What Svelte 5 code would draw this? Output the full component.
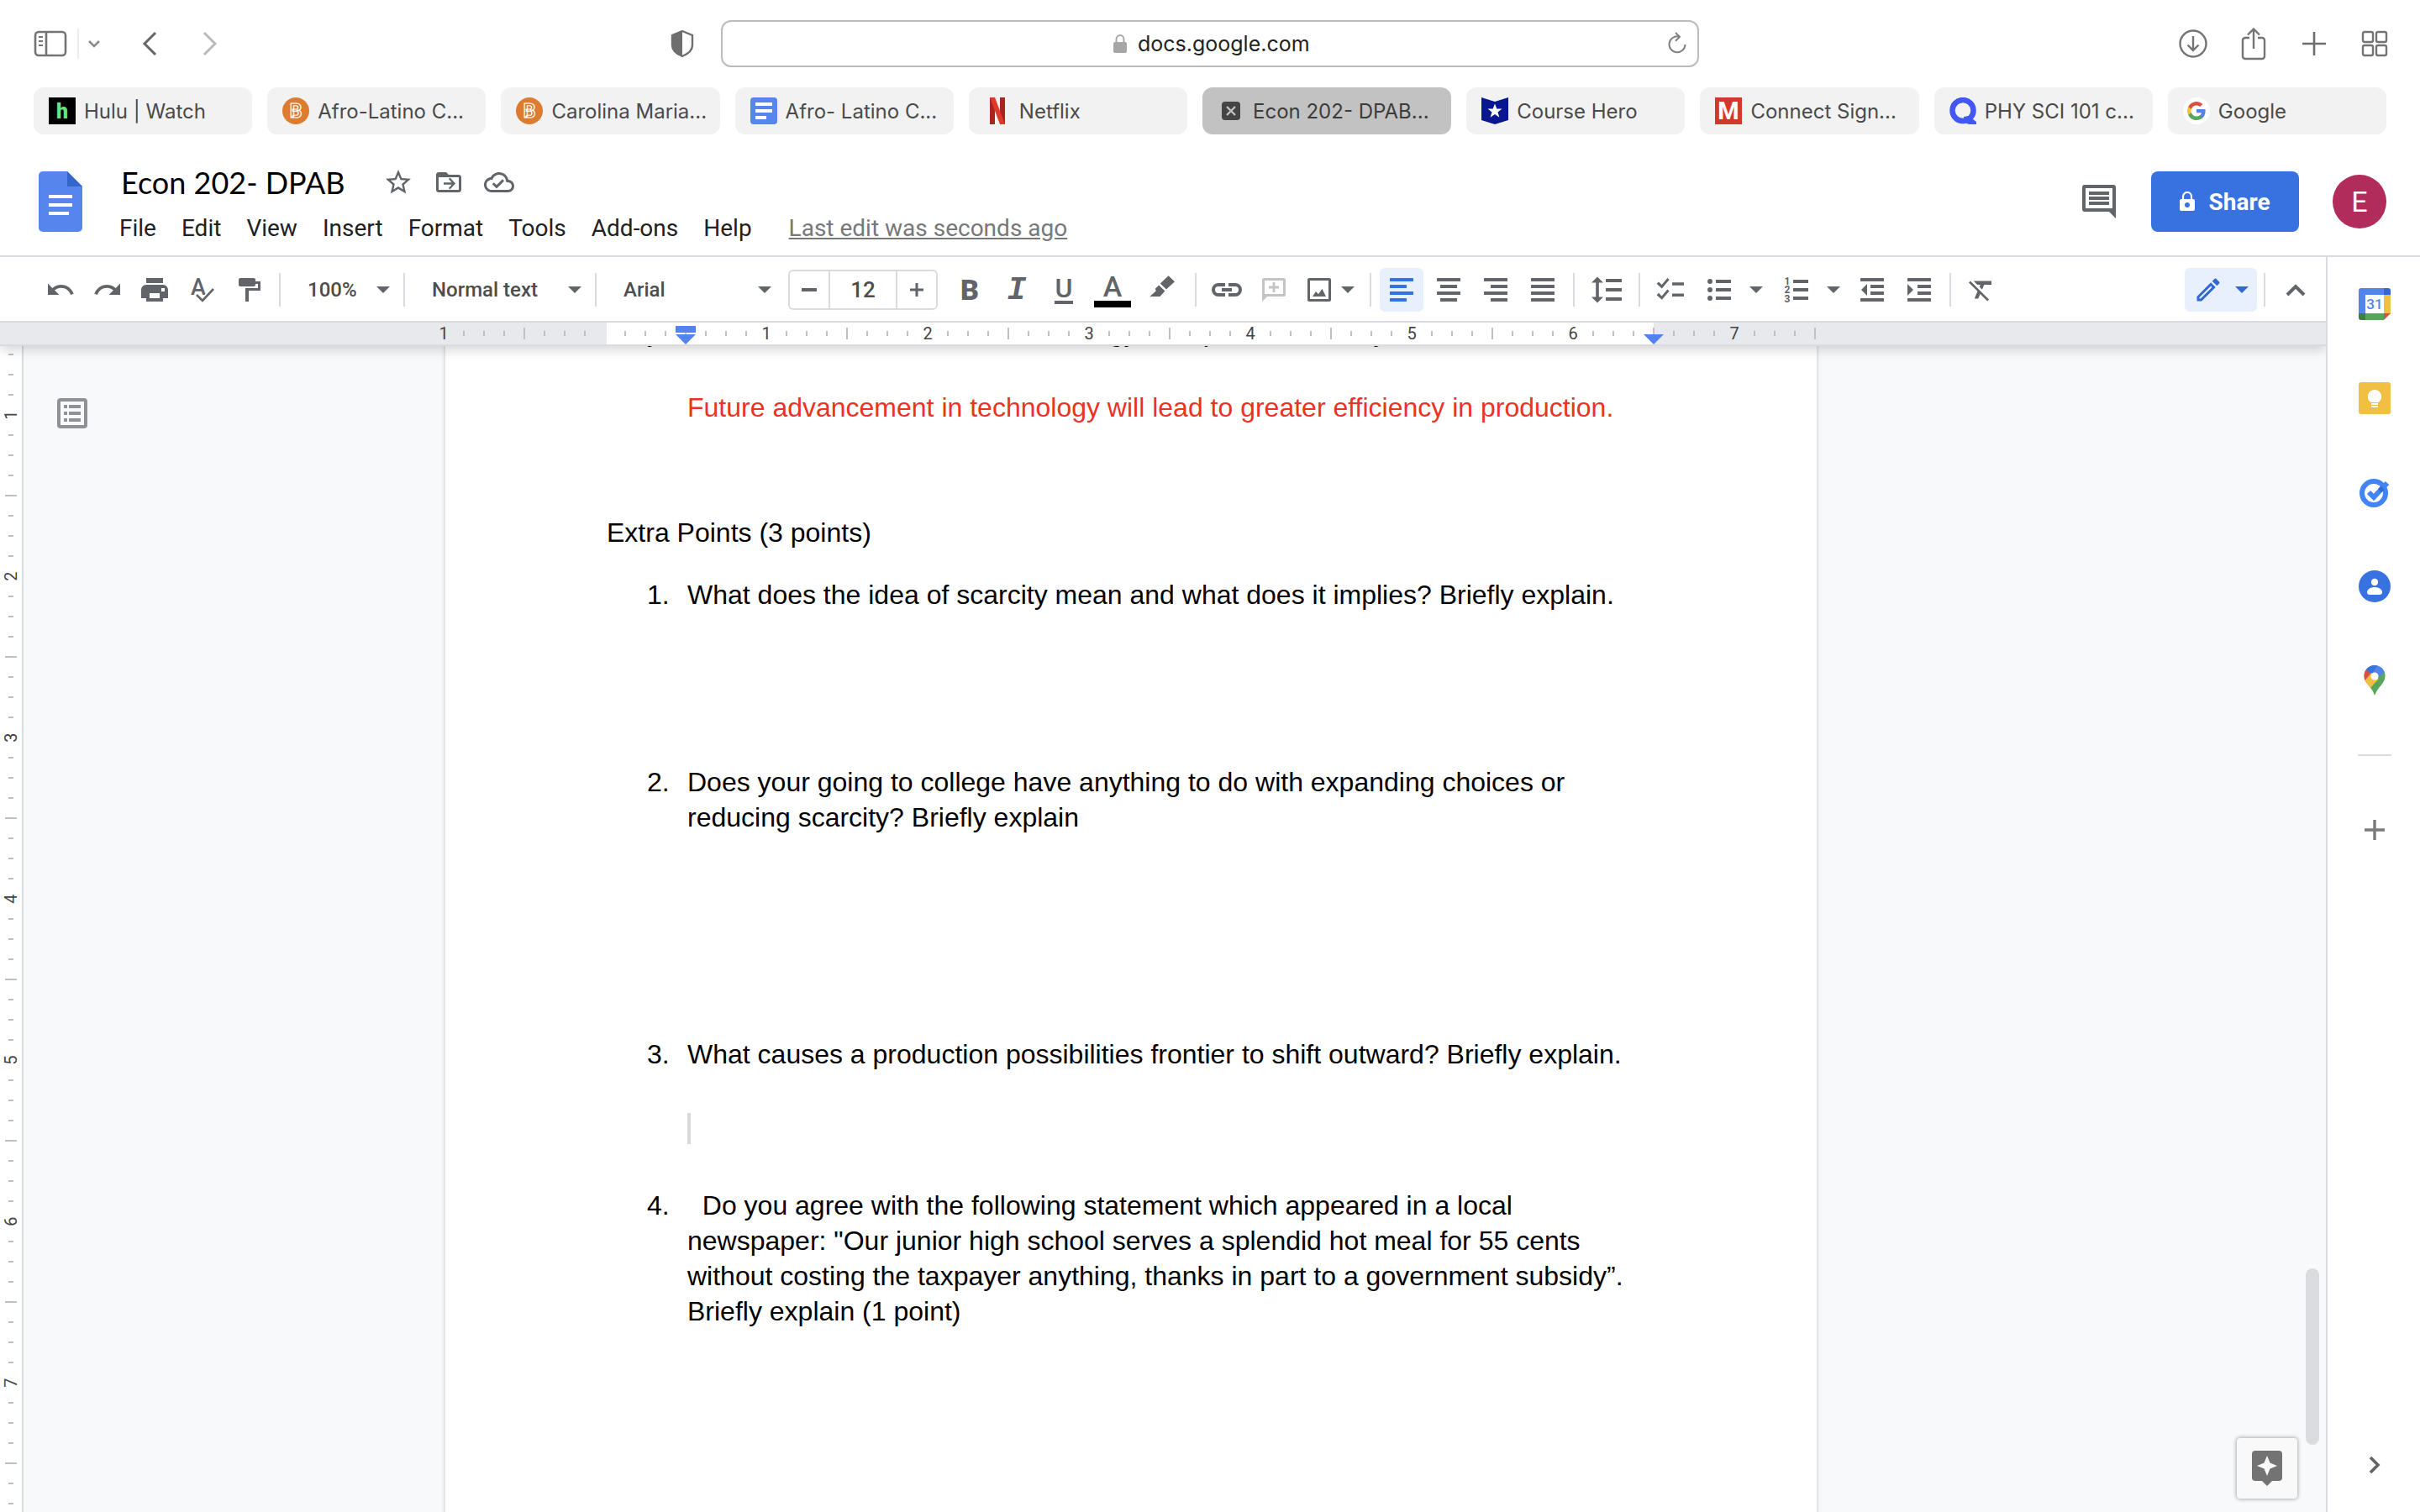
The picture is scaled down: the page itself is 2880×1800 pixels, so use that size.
<script>
	const bookmarks = [
		{ logo: 'hulu', title: 'Hulu | Watch' },
		{ logo: 'brand', title: 'Afro-Latino C...' },
		{ logo: 'brand', title: 'Carolina Maria...' },
		{ logo: 'docs', title: 'Afro- Latino C...' },
		{ logo: 'netflix', title: 'Netflix' },
		{ logo: 'close', title: 'Econ 202- DPAB...', active: true },
		{ logo: 'hero', title: 'Course Hero' },
		{ logo: 'connect', title: 'Connect Sign...' },
		{ logo: 'quizlet', title: 'PHY SCI 101 c...' },
		{ logo: 'google', title: 'Google' }
	];

	const menus = ['File', 'Edit', 'View', 'Insert', 'Format', 'Tools', 'Add-ons', 'Help'];

	// space is the blank room left under each question
	const questions = [
		{ text: 'What does the idea of scarcity mean and what does it implies? Briefly explain.', space: 181 },
		{
			text: 'Does your going to college have anything to do with expanding choices or reducing scarcity? Briefly explain',
			space: 240
		},
		{
			text: 'What causes a production possibilities frontier to shift outward? Briefly explain.',
			space: 52,
			caret: true
		},
		{
			text: '\u00a0\u00a0Do you agree with the following statement which appeared in a local newspaper: "Our junior high school serves a splendid hot meal for 55 cents without costing the taxpayer anything, thanks in part to a government subsidy”. Briefly explain (1 point)',
			space: 0
		}
	];

	// one tick every eighth of an inch
	const ticksAcross = Array.from({ length: 69 }, (_, i) => ({
		label: i % 8 === 0 && i !== 8 ? Math.abs(i / 8 - 1) : '',
		empty: i === 8,
		half: i % 8 === 4
	}));
	const ticksDown = Array.from({ length: 58 }, (_, i) => ({
		label: i % 8 === 3 ? (i + 5) / 8 : '',
		half: i % 8 === 7
	}));

	const icons = {
		print:
			'M4 2h10v3H4zM4 6h10a3 3 0 0 1 3 3v5h-3v2H4v-2H1V9a3 3 0 0 1 3-3zm2 5v3h6v-3zm7-3v2h2V8z',
		paint:
			'M4 2h8a1 1 0 0 1 1 1v3a1 1 0 0 1-1 1H4a1 1 0 0 1-1-1V3a1 1 0 0 1 1-1zM13 4h3v5.5H9V16H7V8h7.5V5.5H13z',
		highlight: 'M12.3.6 16 4.1 11 8.8 7.4 5.3zM6.6 6.2l3.6 3.6L7.2 13H1.2L4.9 9.6 4.4 8.4z',
		link: 'M8 5H4a4 4 0 0 0 0 8h4v-2H4a2 2 0 0 1 0-4h4zM10 5h4a4 4 0 0 1 0 8h-4v-2h4a2 2 0 0 0 0-4h-4zM6 8h6v2H6z',
		comment:
			'M3 2h12a1 1 0 0 1 1 1v9a1 1 0 0 1-1 1H5l-3 3V3a1 1 0 0 1 1-1zM3.5 3.5v8h11v-8zM8.3 4.5h1.4v2.3H12v1.4H9.7v2.3H8.3V8.2H6V6.8h2.3z',
		image:
			'M3 2h12a1 1 0 0 1 1 1v12a1 1 0 0 1-1 1H3a1 1 0 0 1-1-1V3a1 1 0 0 1 1-1zM3.5 3.5v11h11v-11zM5 13l2-3 1.5 1.6 2.2-3.2L13 13z',
		left: 'M2 2h14v2H2zM2 6h10v2H2zM2 10h14v2H2zM2 14h10v2H2z',
		center: 'M2 2h14v2H2zM4 6h10v2H4zM2 10h14v2H2zM4 14h10v2H4z',
		right: 'M2 2h14v2H2zM6 6h10v2H6zM2 10h14v2H2zM6 14h10v2H6z',
		justify: 'M2 2h14v2H2zM2 6h14v2H2zM2 10h14v2H2zM2 14h14v2H2z',
		spacing:
			'M3.5 1.2 0 4.8h2.6v8.4H0l3.5 3.6L7 13.2H4.4V4.8H7zM8.5 2.5H18v2H8.5zM8.5 8H18v2H8.5zM8.5 13.5H18v2H8.5z',
		checklist:
			'M.8 5.4 2 4.2l1.8 1.8 3.4-4 1.1 1-4.4 5.2zM10 4.6h7v1.8h-7zM.8 12.1 2 10.9l1.8 1.8 3.4-4 1.1 1-4.4 5.2zM10 11.2h7V13h-7z',
		bullets:
			'M3.5 2.5a1.5 1.5 0 1 0 0 3 1.5 1.5 0 1 0 0-3zM7 3h9v2H7zM3.5 7.5a1.5 1.5 0 1 0 0 3 1.5 1.5 0 1 0 0-3zM7 8h9v2H7zM3.5 12.5a1.5 1.5 0 1 0 0 3 1.5 1.5 0 1 0 0-3zM7 13h9v2H7z',
		numbers: 'M7 3h9v2H7zM7 8h9v2H7zM7 13h9v2H7z',
		outdent: 'M2 2h14v2H2zM8 6h8v2H8zM8 10h8v2H8zM2 14h14v2H2zM6 5.5v7L2.5 9z',
		indent: 'M2 2h14v2H2zM8 6h8v2H8zM8 10h8v2H8zM2 14h14v2H2zM2 5.5v7L5.5 9z',
		undo: 'M12.5 8c-2.65 0-5.05.99-6.9 2.6L2 7v9h9l-3.62-3.62c1.39-1.16 3.16-1.88 5.12-1.88 3.54 0 6.55 2.31 7.6 5.5l2.37-.78C21.08 11.03 17.15 8 12.5 8z',
		redo: 'M18.4 10.6C16.55 8.99 14.15 8 11.5 8c-4.65 0-8.58 3.03-9.96 7.22L3.9 16c1.05-3.19 4.05-5.5 7.6-5.5 1.95 0 3.73.72 5.12 1.88L13 16h9V7l-3.6 3.6z',
		clear:
			'M3.27 5 2 6.27l6.97 6.97L6.5 19h3l1.57-3.66L16.73 21 18 19.73 3.55 5.27 3.27 5zM6 5v.18L8.82 8h2.4l-.72 1.68 2.1 2.1L14.21 8H20V5H6z',
		pencil:
			'M14.06 9.02l.92.92L5.92 19H5v-.92l9.06-9.06M17.66 3c-.25 0-.51.1-.7.29l-1.83 1.83 3.75 3.75 1.83-1.83c.39-.39.39-1.02 0-1.41l-2.34-2.34c-.2-.2-.45-.29-.71-.29zm-3.6 3.19L3 17.25V21h3.75L17.81 9.94l-3.75-3.75z',
		star: 'M22 9.24l-7.19-.62L12 2 9.19 8.63 2 9.24l5.46 4.73L5.82 21 12 17.27 18.18 21l-1.63-7.03L22 9.24zM12 15.4l-3.76 2.27 1-4.28-3.32-2.88 4.38-.38L12 6.1l1.71 4.04 4.38.38-3.32 2.88 1 4.28L12 15.4z',
		move: 'M20 6h-8l-2-2H4c-1.1 0-2 .9-2 2v12c0 1.1.9 2 2 2h16c1.1 0 2-.9 2-2V8c0-1.1-.9-2-2-2zm0 12H4V8h16v10zM12 9.4l1-1 4.4 4.6-4.4 4.6-1-1 2.4-2.700H8v-1.800h6.400z',
		cloud:
			'M19.35 10.04C18.67 6.59 15.64 4 12 4 9.11 4 6.61 5.64 5.36 8.04 2.35 8.36 0 10.9 0 14c0 3.31 2.69 6 6 6h13c2.76 0 5-2.24 5-5 0-2.64-2.05-4.78-4.65-4.96zM19 18H6c-2.21 0-4-1.79-4-4 0-2.05 1.53-3.76 3.56-3.97l1.07-.11.5-.95C8.08 7.14 9.94 6 12 6c2.62 0 4.88 1.86 5.39 4.43l.3 1.5 1.53.11c1.56.1 2.78 1.41 2.78 2.96 0 1.65-1.35 3-3 3zm-9-3.82l-2.09-2.09L6.5 13.5 10 17l6.01-6.01-1.41-1.41z'
	};

	const alignments = ['left', 'center', 'right', 'justify'];
</script>

{#snippet icon(name, box = 18)}
	<svg class="icon" viewBox="0 0 {box} {box}" aria-hidden="true">
		<path d={icons[name]} fill="currentColor" fill-rule="evenodd" />
	</svg>
{/snippet}

{#snippet arrow()}
	<svg class="arrow" viewBox="0 0 16 8" aria-hidden="true"><path d="M0 0h16L8 8z" fill="currentColor" /></svg>
{/snippet}

{#snippet favicon(logo)}
	<svg class="favicon" viewBox="0 0 32 32" aria-hidden="true">
		{#if logo === 'hulu'}
			<path d="M0 0h32v32H0z" />
			<text x="16" y="25" class="glyph" font-size="25" font-weight="900" fill="#66e48a">h</text>
		{:else if logo === 'brand'}
			<circle cx="16" cy="16" r="16" fill="#dc7c31" />
			<text x="16" y="24" class="glyph" font-size="23" font-weight="700" fill="#dc7c31" stroke="#fff" stroke-width="1.2">B</text>
		{:else if logo === 'docs'}
			<rect width="32" height="32" rx="4" fill="#5585ed" />
			<path d="M6 6h20v4H6zM6 14h20v4H6zM6 22h13v4H6z" fill="#fff" />
		{:else if logo === 'netflix'}
			<path d="M7 0h6v32H7zM19 0h6v32h-6z" fill="#a8261d" />
			<path d="M7 0h6l12 32h-6z" fill="#dd3a2a" />
		{:else if logo === 'close'}
			<rect x="5" y="5" width="22" height="22" rx="4" fill="#444" />
			<path d="M11 11l10 10M21 11L11 21" stroke="#c2c2c2" stroke-width="2.4" />
		{:else if logo === 'hero'}
			<path d="M0 0l16 5L32 0v27l-16 5-16-5z" fill="#08178f" />
			<path d="M16 7.5l2.3 6h6.2l-5 4 1.9 6.3-5.4-3.8-5.4 3.8 1.9-6.3-5-4h6.2z" fill="#fff" />
		{:else if logo === 'connect'}
			<path d="M0 0h32v32H0z" fill="#d3382f" />
			<text x="16" y="26" class="glyph" font-size="29" font-weight="700" fill="#fff">M</text>
		{:else if logo === 'quizlet'}
			<circle cx="16" cy="15.5" r="12.5" fill="none" stroke="#4257f5" stroke-width="6.5" />
			<path d="M17 23l6-1 9 7v3h-8c-4 0-7-4-7-9z" fill="#4257f5" />
		{:else}
			<circle cx="16" cy="16" r="16" fill="#fff" />
			<g transform="translate(4 4)">
				<path d="M22.6 12.3c0-.8-.1-1.6-.2-2.3H12v4.3h5.9c-.3 1.4-1 2.5-2.2 3.3v2.8h3.6c2.1-2 3.3-4.8 3.3-8.1z" fill="#5383ec" />
				<path d="M12 23c3 0 5.5-1 7.3-2.7l-3.6-2.8c-1 .7-2.2 1.1-3.7 1.1-2.9 0-5.3-1.9-6.2-4.5H2.2v2.8C4 20.5 7.7 23 12 23z" fill="#58a55c" />
				<path d="M5.8 14.1a6.6 6.6 0 0 1 0-4.2V7.1H2.2a11 11 0 0 0 0 9.8z" fill="#f1bf42" />
				<path d="M12 5.4c1.6 0 3.1.6 4.2 1.6l3.2-3.1A11 11 0 0 0 2.2 7.1l3.6 2.8C6.7 7.3 9.1 5.4 12 5.4z" fill="#d95040" />
			</g>
		{/if}
	</svg>
{/snippet}

<div class="window">
	<header class="browser">
		<div class="browser-left">
			<button aria-label="Show sidebar">
				<svg width="40" height="32" viewBox="0 0 40 32" fill="none" stroke="#747474" stroke-width="2.6">
					<rect x="2" y="2" width="36" height="28" rx="4" />
					<path d="M15 2v28" />
					<path d="M6 8h5M6 13h5M6 18h5" stroke-width="2" />
				</svg>
			</button>
			<button class="chooser" aria-label="Tab groups">
				<svg width="16" height="12" viewBox="0 0 16 12"><path d="M2 3l6 6 6-6" fill="none" stroke="#8a8a8a" stroke-width="2.6" /></svg>
			</button>
			<button class="back" aria-label="Back">
				<svg width="20" height="32" viewBox="0 0 20 32"><path d="M17 3L4 16l13 13" fill="none" stroke="#666" stroke-width="3" /></svg>
			</button>
			<button class="forward" aria-label="Forward">
				<svg width="20" height="32" viewBox="0 0 20 32"><path d="M3 3l13 13L3 29" fill="none" stroke="#bababa" stroke-width="3" /></svg>
			</button>
			<button class="shield" aria-label="Privacy report">
				<svg width="28" height="34" viewBox="0 0 28 34">
					<path d="M14 2l12 5v12c0 6-5 10-12 13C7 29 2 25 2 19V7z" fill="#fff" stroke="#6e6e6e" stroke-width="2.4" />
					<path d="M14 2v30C7 29 2 25 2 19V7z" fill="#6e6e6e" />
				</svg>
			</button>
		</div>
		<div class="address">
			<svg width="18" height="24" viewBox="0 0 18 24">
				<rect x="1" y="10" width="16" height="13" rx="2" fill="#a6a6a6" />
				<path d="M4.500 11V7a4.500 5 0 0 1 9 0v4" fill="none" stroke="#a6a6a6" stroke-width="2" />
			</svg>
			<span class="host">docs.google.com</span>
			<button class="reload" aria-label="Reload">
				<svg width="24" height="28" viewBox="0 0 24 28" fill="none" stroke="#808080" stroke-width="2">
					<path d="M14 5.500a9.500 9.500 0 1 0 7.500 9.500" />
					<path d="M10 1l5 4.700-5 5" />
				</svg>
			</button>
		</div>
		<div class="browser-right">
			<button aria-label="Downloads">
				<svg width="36" height="36" viewBox="0 0 36 36" fill="none" stroke="#747474" stroke-width="2.4">
					<circle cx="18" cy="18" r="15.5" />
					<path d="M18 9v17M11.500 19.500L18 26l6.500-6.500" />
				</svg>
			</button>
			<button aria-label="Share page">
				<svg width="36" height="40" viewBox="0 0 36 40" fill="none" stroke="#747474" stroke-width="2.4">
					<path d="M13 13H8a3 3 0 0 0-3 3v19a3 3 0 0 0 3 3h20a3 3 0 0 0 3-3V16a3 3 0 0 0-3-3h-5" />
					<path d="M18 26V3M11 9.500L18 2.500l7 7" />
				</svg>
			</button>
			<button aria-label="New tab">
				<svg width="36" height="36" viewBox="0 0 36 36"><path d="M18 4v28M4 18h28" stroke="#6e6e6e" stroke-width="2.6" /></svg>
			</button>
			<button aria-label="Tab overview">
				<svg width="36" height="36" viewBox="0 0 36 36" fill="none" stroke="#747474" stroke-width="2.4">
					<rect x="4" y="4" width="12" height="12" rx="2" />
					<rect x="20" y="4" width="12" height="12" rx="2" />
					<rect x="4" y="20" width="12" height="12" rx="2" />
					<rect x="20" y="20" width="12" height="12" rx="2" />
				</svg>
			</button>
		</div>
	</header>

	<nav class="tabs" aria-label="Tabs">
		{#each bookmarks as tab}
			<a href="#tab" class="tab" class:active={tab.active}>
				{@render favicon(tab.logo)}
				<span>{tab.title}</span>
			</a>
		{/each}
	</nav>

	<div class="docs-header">
		<svg class="docs-logo" viewBox="0 0 52 72" aria-hidden="true">
			<path d="M5 0h29l18 18v49a5 5 0 0 1-5 5H5a5 5 0 0 1-5-5V5a5 5 0 0 1 5-5z" fill="#5585ed" />
			<path d="M34 0l18 18H34z" fill="#3465ca" />
			<path d="M12 28h28v4H12zM12 38h28v4H12zM12 48h24v4H12z" fill="#fff" />
		</svg>
		<div class="docs-title">
			<div class="title-row">
				<input class="doc-name" aria-label="Document name" value="Econ 202- DPAB" />
				<button aria-label="Star">{@render icon('star', 24)}</button>
				<button aria-label="Move">{@render icon('move', 24)}</button>
				<button aria-label="Saved to Drive">{@render icon('cloud', 24)}</button>
			</div>
			<nav class="menus" aria-label="Menu bar">
				{#each menus as menu}
					<button>{menu}</button>
				{/each}
				<a href="#history">Last edit was seconds ago</a>
			</nav>
		</div>
		<button class="comments" aria-label="Open comment history">
			<svg width="40" height="40" viewBox="0 0 40 40">
				<path d="M3 0h34a3 3 0 0 1 3 3v37l-8-8H3a3 3 0 0 1-3-3V3a3 3 0 0 1 3-3zM4 4v24h32V4zM8 8h24v4H8zM8 14h24v4H8zM8 20h24v4H8z" fill="#616469" fill-rule="evenodd" />
			</svg>
		</button>
		<button class="share">
			<svg width="18" height="24" viewBox="0 0 18 24">
				<path d="M2 9h14a2 2 0 0 1 2 2v10a2 2 0 0 1-2 2H2a2 2 0 0 1-2-2V11a2 2 0 0 1 2-2zM9 13a3 3 0 1 0 0 6 3 3 0 1 0 0-6z" fill="#fff" fill-rule="evenodd" />
				<path d="M4 10V6a5 5 0 0 1 10 0v4" fill="none" stroke="#fff" stroke-width="2.2" />
			</svg>
			Share
		</button>
		<button class="avatar" aria-label="Account">E</button>
	</div>

	<div class="workspace">
		<div class="editor">
			<div class="chrome">
				<div class="toolbar">
					<button aria-label="Undo">{@render icon('undo', 24)}</button>
					<button aria-label="Redo">{@render icon('redo', 24)}</button>
					<button aria-label="Print">{@render icon('print')}</button>
					<button aria-label="Spelling check">
						<svg class="icon" viewBox="0 0 36 36">
							<text x="14" y="24" class="glyph" font-size="27" font-weight="500" fill="currentColor">A</text>
							<path d="M12 24l7 7 13-14" fill="none" stroke="#fff" stroke-width="6" />
							<path d="M12 24l7 7 13-14" fill="none" stroke="currentColor" stroke-width="2.6" />
						</svg>
					</button>
					<button aria-label="Paint format">{@render icon('paint')}</button>
					<span class="rule"></span>
					<label class="pick zoom">
						<select aria-label="Zoom"><option>100%</option></select>
						{@render arrow()}
					</label>
					<span class="rule"></span>
					<label class="pick styles">
						<select aria-label="Styles"><option>Normal text</option></select>
						{@render arrow()}
					</label>
					<span class="rule"></span>
					<label class="pick fonts">
						<select aria-label="Font"><option>Arial</option></select>
						{@render arrow()}
					</label>
					<div class="size">
						<button aria-label="Decrease font size">
							<svg width="20" height="20" viewBox="0 0 20 20"><path d="M1 10h18" stroke="currentColor" stroke-width="4" /></svg>
						</button>
						<input aria-label="Font size" value="12" />
						<button aria-label="Increase font size">
							<svg width="20" height="20" viewBox="0 0 20 20"><path d="M2 10h16M10 2v16" stroke="currentColor" stroke-width="3" /></svg>
						</button>
					</div>
					<button class="bold" aria-label="Bold">B</button>
					<button class="italic" aria-label="Italic">I</button>
					<button class="underline" aria-label="Underline"><span>U</span></button>
					<button class="wide color" aria-label="Text color"><span>A</span></button>
					<button class="wide" aria-label="Highlight color">{@render icon('highlight')}</button>
					<span class="rule"></span>
					<button aria-label="Insert link">{@render icon('link')}</button>
					<button class="off" aria-label="Add comment" disabled>{@render icon('comment')}</button>
					<button class="split tight" aria-label="Insert image">{@render icon('image')}{@render arrow()}</button>
					<span class="rule"></span>
					{#each alignments as name}
						<button class:on={name === 'left'} aria-label="Align {name}">{@render icon(name)}</button>
					{/each}
					<span class="rule"></span>
					<button class="wide" aria-label="Line spacing">{@render icon('spacing')}</button>
					<span class="rule"></span>
					<button aria-label="Checklist">{@render icon('checklist')}</button>
					<button class="split" aria-label="Bulleted list">{@render icon('bullets')}{@render arrow()}</button>
					<button class="split" aria-label="Numbered list">
						<svg class="icon" viewBox="0 0 18 18">
							<g class="glyph" font-size="6" font-weight="700" fill="currentColor">
								<text x="3.5" y="6">1</text>
								<text x="3.5" y="11.2">2</text>
								<text x="3.5" y="16.4">3</text>
							</g>
							<path d={icons.numbers} fill="currentColor" />
						</svg>
						{@render arrow()}
					</button>
					<button aria-label="Decrease indent">{@render icon('outdent')}</button>
					<button aria-label="Increase indent">{@render icon('indent')}</button>
					<span class="rule"></span>
					<button aria-label="Clear formatting">{@render icon('clear', 24)}</button>
					<button class="mode on" aria-label="Editing mode">{@render icon('pencil', 24)}{@render arrow()}</button>
					<span class="rule"></span>
					<button aria-label="Hide the menus">
						<svg width="28" height="20" viewBox="0 0 28 20"><path d="M4 16L14 6l10 10" fill="none" stroke="currentColor" stroke-width="4" /></svg>
					</button>
				</div>
				<div class="ruler">
					{#each ticksAcross as tick, i}
						<span class="tick" class:half={tick.half} class:plain={!tick.label && !tick.empty}>
							{tick.label}
							{#if i === 12}
								<svg class="marker" viewBox="0 0 24 22"><path d="M0 0h24v8H0zM0 10h24L12 22z" fill="#5383ec" /></svg>
							{:else if i === 60}
								<svg class="marker" viewBox="0 0 24 22"><path d="M0 10h24L12 22z" fill="#5383ec" /></svg>
							{/if}
						</span>
					{/each}
				</div>
			</div>

			<main class="canvas">
				<div class="ruler-down">
					{#each ticksDown as tick}
						<span class="tick" class:half={tick.half} class:plain={!tick.label}>{tick.label}</span>
					{/each}
				</div>
				<div class="margin">
					<button class="outline" aria-label="Show document outline">
						<svg width="36" height="36" viewBox="0 0 36 36">
							<path d="M4 0h28a4 4 0 0 1 4 4v28a4 4 0 0 1-4 4H4a4 4 0 0 1-4-4V4a4 4 0 0 1 4-4zM4 4v28h28V4zM8 8h4v4H8zM14 8h14v4H14zM8 16h4v4H8zM14 16h14v4H14zM8 24h4v4H8zM14 24h14v4H14z" fill="#909196" fill-rule="evenodd" />
						</svg>
					</button>
				</div>
				<article class="page">
					<p class="cut">Why does future advancement in technology to improve economy</p>
					<p class="answer">Future advancement in technology will lead to greater efficiency in production.</p>
					<p class="heading">Extra Points (3 points)</p>
					<ol>
						{#each questions as question, i}
							<li style:margin-bottom="{question.space}px">
								<span class="number">{i + 1}.</span>
								<div>
									<p>{question.text}</p>
									{#if question.caret}<div class="caret"></div>{/if}
								</div>
							</li>
						{/each}
					</ol>
				</article>
				<div class="scrollbar"></div>
				<button class="explore" aria-label="Explore">
					<svg width="36" height="42" viewBox="0 0 36 42">
						<path d="M4 0h28a4 4 0 0 1 4 4v28a4 4 0 0 1-4 4h-8l-6 6-6-6H4a4 4 0 0 1-4-4V4a4 4 0 0 1 4-4zM18 6l-3.500 8.500L6 18l8.500 3.500L18 30l3.500-8.500L30 18l-8.500-3.500z" fill="#737373" fill-rule="evenodd" />
					</svg>
				</button>
			</main>
		</div>

		<aside class="addons">
			<button aria-label="Calendar">
				<svg width="38" height="38" viewBox="0 0 38 38">
					<path d="M3 0h27v8H8v22H0V3a3 3 0 0 1 3-3z" fill="#5383ec" />
					<path d="M30 0h5a3 3 0 0 1 3 3v5h-8z" fill="#3367d1" />
					<path d="M30 8h8v22h-8z" fill="#f1bf42" />
					<path d="M8 30h22v8H8z" fill="#58a55c" />
					<path d="M0 30h8v8H3a3 3 0 0 1-3-3z" fill="#3f7d43" />
					<path d="M30 30h8l-8 8z" fill="#d95040" />
					<text x="19" y="25" class="glyph" font-size="17" font-weight="500" fill="#5383ec">31</text>
				</svg>
			</button>
			<button aria-label="Keep">
				<svg width="38" height="38" viewBox="0 0 38 38">
					<rect width="38" height="38" rx="3" fill="#f1bf42" />
					<path d="M19 9a8.200 8.200 0 0 1 4.500 15h-9A8.200 8.200 0 0 1 19 9zM15 25h8v2h-8zM15 28h8v2h-8z" fill="#fff" />
				</svg>
			</button>
			<button aria-label="Tasks">
				<svg width="38" height="38" viewBox="0 0 38 38">
					<circle cx="18" cy="20" r="14" fill="none" stroke="#4284f5" stroke-width="6" />
					<path d="M12 19l6 6L34 8" fill="none" stroke="#4284f5" stroke-width="6" />
					<path d="M26.500 11.500l4 4-3 3.500-4.500-4z" fill="#3068d6" />
				</svg>
			</button>
			<button aria-label="Contacts">
				<svg width="38" height="38" viewBox="0 0 38 38">
					<circle cx="19" cy="19" r="19" fill="#3871e0" />
					<circle cx="19" cy="14" r="4.2" fill="#fff" />
					<path d="M10 26c0-4 5-6 9-6s9 2 9 6c0 2-1 3-3 3H13c-2 0-3-1-3-3z" fill="#fff" />
				</svg>
			</button>
			<button aria-label="Maps">
				<svg width="26" height="36" viewBox="0 0 26 36">
					<clipPath id="pin"><path d="M13 0a12.500 12.500 0 0 1 12.500 13c0 9-8.500 12-12.500 23C10 25 .5 22 .5 13A12.500 12.500 0 0 1 13 0z" /></clipPath>
					<g clip-path="url(#pin)">
						<path d="M0 0h26v36H0z" fill="#58a55c" />
						<path d="M3 5V-2h15L8 13z" fill="#3871e0" />
						<path d="M17 0l9 6-12 13-6-6z" fill="#5383ec" />
						<path d="M0 4l3 1 6 6-9 11z" fill="#d95040" />
						<path d="M0 20L9 9l9 7L7 28z" fill="#f1bf42" />
					</g>
					<circle cx="13" cy="13" r="4.6" fill="#fff" />
				</svg>
			</button>
			<hr />
			<button aria-label="Get add-ons">
				<svg width="24" height="24" viewBox="0 0 24 24"><path d="M12 0v24M0 12h24" stroke="#7a7a7a" stroke-width="3.4" /></svg>
			</button>
			<button class="collapse" aria-label="Hide side panel">
				<svg width="20" height="24" viewBox="0 0 20 24"><path d="M5 3l9 9-9 9" fill="none" stroke="#616469" stroke-width="3.6" /></svg>
			</button>
		</aside>
	</div>
</div>

<style>
	:global(body) {
		margin: 0;
	}

	.window {
		display: flex;
		flex-direction: column;
		height: 100vh;
		overflow: hidden;
		background: #fff;
		color: #202124;
		font-family: Roboto, sans-serif;
		font-size: 28px;
	}

	button {
		display: flex;
		align-items: center;
		justify-content: center;
		flex: none;
		margin: 0;
		border: 0;
		padding: 0;
		background: none;
		color: inherit;
		font: inherit;
	}

	input,
	select {
		min-width: 0;
		margin: 0;
		border: 0;
		padding: 0;
		background: none;
		color: inherit;
		font: inherit;
	}

	svg {
		display: block;
		flex: none;
	}

	.glyph {
		font-family: Roboto, sans-serif;
		text-anchor: middle;
	}

	.icon {
		width: 36px;
		height: 36px;
	}

	.arrow {
		width: 16px;
		height: 8px;
	}

	/* browser */

	.browser {
		display: flex;
		flex: none;
		align-items: center;
		height: 104px;
	}

	.browser-left,
	.browser-right {
		display: flex;
		flex: 1;
		align-items: center;
		height: 56px;
		box-sizing: border-box;
	}

	.browser-left {
		padding: 0 32px 0 40px;
	}

	.browser-right {
		justify-content: flex-end;
		gap: 36px;
		padding: 0 36px;
	}

	.chooser {
		margin-left: 12px;
		border-left: 2px solid #ececec;
		padding-left: 10px;
		height: 36px;
	}

	.back {
		margin-left: 48px;
	}

	.forward {
		margin-left: 52px;
	}

	.shield {
		margin-left: auto;
	}

	.address {
		display: flex;
		flex: 0 1 1164px;
		align-items: center;
		gap: 12px;
		height: 56px;
		box-sizing: border-box;
		border: 2px solid #bcbcbc;
		border-radius: 12px;
		padding: 0 12px 0 464px;
		color: #222;
		font-family: Inter, sans-serif;
		font-size: 25px;
	}

	.reload {
		margin-left: auto;
	}

	.tabs {
		display: flex;
		flex: none;
		gap: 18px;
		padding: 0 40px;
	}

	.tab {
		display: flex;
		flex: 1 1 260px;
		align-items: center;
		gap: 10px;
		height: 56px;
		min-width: 0;
		box-sizing: border-box;
		border-radius: 12px;
		padding: 0 18px;
		background: #f2f2f2;
		color: #4a4a4a;
		font-family: Inter, sans-serif;
		font-size: 24px;
		text-decoration: none;
		white-space: nowrap;
	}

	.tab.active {
		flex-basis: 296px;
		background: #c2c2c2;
		color: #3c3c3c;
	}

	.favicon {
		width: 32px;
		height: 32px;
	}

	/* document header */

	.docs-header {
		display: flex;
		flex: none;
		align-items: center;
		height: 146px;
		box-sizing: border-box;
		border-bottom: 2px solid #dadbdf;
		padding: 16px 40px 0 46px;
	}

	.docs-logo {
		width: 52px;
		height: 72px;
	}

	.docs-title {
		display: flex;
		flex: 1;
		flex-direction: column;
		gap: 8px;
		margin-left: 44px;
		padding-top: 6px;
	}

	.title-row {
		display: flex;
		align-items: center;
		gap: 24px;
		color: #616469;
	}

	.doc-name {
		width: 290px;
		height: 48px;
		box-sizing: border-box;
		padding-left: 2px;
		color: #000;
		font-family: Lato, sans-serif;
		font-size: 36px;
	}

	.menus {
		display: flex;
		align-items: center;
		gap: 30px;
		height: 44px;
	}

	.menus a {
		margin-left: 14px;
		color: #77787a;
	}

	.comments {
		margin-right: 42px;
	}

	.share {
		gap: 16px;
		width: 176px;
		height: 72px;
		border-radius: 8px;
		background: #3871e0;
		color: #fff;
		font-weight: 700;
	}

	.avatar {
		margin-left: 40px;
		width: 64px;
		height: 64px;
		border-radius: 50%;
		background: #b12c5b;
		color: #fff;
		font-size: 34px;
	}

	/* toolbar */

	.workspace {
		display: flex;
		flex: 1;
		min-height: 0;
	}

	.editor {
		display: flex;
		flex: 1;
		flex-direction: column;
		min-width: 0;
		overflow: hidden;
	}

	.chrome {
		position: relative;
		z-index: 1;
		box-shadow: 0 4px 14px rgb(0 0 0 / 18%);
	}

	.toolbar {
		display: flex;
		align-items: center;
		height: 76px;
		box-sizing: border-box;
		padding: 2px 8px 0 44px;
		background: #fff;
		color: #616469;
		font-size: 24px;
		font-weight: 500;
	}

	.toolbar > button {
		width: 52px;
		height: 52px;
		margin: 0 2px;
		border-radius: 6px;
	}

	.toolbar > .wide {
		width: 56px;
	}

	.toolbar > .split {
		justify-content: flex-start;
		gap: 18px;
		width: 92px;
		margin: 0;
		padding-left: 12px;
		box-sizing: border-box;
	}

	.toolbar > .split.tight {
		gap: 8px;
		width: 78px;
		padding-left: 8px;
	}

	.toolbar > .on {
		background: #e8effd;
		color: #3871e0;
	}

	.toolbar > .off {
		color: #c4c4c4;
	}

	.toolbar > .mode {
		gap: 14px;
		width: 86px;
		margin: 0 0 0 auto;
		color: #3367d1;
	}

	.rule {
		flex: none;
		width: 2px;
		height: 40px;
		margin: 0 8px;
		background: #dadbdf;
	}

	.pick {
		display: flex;
		align-items: center;
		height: 52px;
		box-sizing: border-box;
		padding: 0 8px 0 24px;
	}

	.pick select {
		flex: 1;
		appearance: none;
		color: #4d4d4d;
	}

	.zoom {
		width: 130px;
	}

	.styles {
		width: 210px;
	}

	.fonts {
		width: 208px;
	}

	.size {
		display: flex;
		width: 178px;
		height: 48px;
		margin: 0 10px 0 12px;
		box-sizing: border-box;
		border: 2px solid #dadbdf;
		border-radius: 6px;
	}

	.size button {
		width: 46px;
	}

	.size input {
		flex: 1;
		border: solid #dadbdf;
		border-width: 0 2px;
		color: #4d4d4d;
		font-size: 26px;
		text-align: center;
	}

	.toolbar .bold {
		font-size: 34px;
		font-weight: 900;
	}

	.toolbar .italic {
		font: italic bold 38px 'Liberation Mono', monospace;
	}

	.underline span {
		border-bottom: 4px solid;
		padding: 0 1px;
		font-size: 32px;
		line-height: 30px;
	}

	.color span {
		border-bottom: 8px solid #000;
		width: 44px;
		font-size: 34px;
		line-height: 34px;
	}

	/* rulers */

	.ruler {
		display: flex;
		height: 30px;
		box-sizing: border-box;
		border: solid #dadbdf;
		border-width: 2px 0;
		padding-left: 516px;
		background: linear-gradient(to right, #e8e9ed 722px, #fff 722px, #fff 1968px, #e8e9ed 1968px);
		color: #444;
		font-size: 20px;
	}

	.tick {
		position: relative;
		display: flex;
		flex: none;
		align-items: center;
		justify-content: center;
		width: 24px;
	}

	.plain::before {
		width: 2px;
		height: 6px;
		background: #bdc0c5;
		content: '';
	}

	.half::before {
		height: 14px;
	}

	.marker {
		position: absolute;
		top: 4px;
		left: 0;
		width: 24px;
		height: 22px;
	}

	.canvas {
		position: relative;
		display: flex;
		flex: 1;
		min-height: 0;
		background: #f8f9fb;
		overflow: hidden;
	}

	.ruler-down {
		flex: none;
		width: 28px;
		margin-top: -2px;
		box-sizing: border-box;
		border-right: 2px solid #dadbdf;
		background: #fff;
		color: #444;
		font-size: 20px;
	}

	.ruler-down .tick {
		width: 26px;
		height: 24px;
		transform: rotate(-90deg);
	}

	/* page */

	.margin {
		flex: none;
		width: 502px;
		box-sizing: border-box;
		padding: 62px 0 0 40px;
	}

	.page {
		flex: none;
		width: 1632px;
		height: 2112px;
		margin-top: -38px;
		box-sizing: border-box;
		padding: 0 192px;
		background: #fff;
		box-shadow: 0 0 4px 1px rgb(60 64 67 / 20%);
		color: #000;
		font-family: 'Liberation Sans', Arial, sans-serif;
		font-size: 32px;
		line-height: 42px;
	}

	p {
		margin: 0;
	}

	.cut {
		margin-bottom: 48px;
	}

	.answer {
		margin-bottom: 107px;
		padding-left: 96px;
		color: #ea3323;
	}

	.heading {
		margin-bottom: 32px;
	}

	ol {
		margin: 0;
		padding: 0 0 0 48px;
		list-style: none;
	}

	li {
		display: flex;
	}

	.number {
		flex: none;
		width: 48px;
	}

	.caret {
		width: 4px;
		height: 37px;
		margin-top: 49px;
		background: #d9d9d9;
	}

	.scrollbar {
		position: absolute;
		right: 8px;
		bottom: 80px;
		width: 16px;
		height: 210px;
		border-radius: 8px;
		background: #dadce0;
	}

	.explore {
		position: absolute;
		right: 34px;
		bottom: 16px;
		width: 72px;
		height: 72px;
		border-radius: 4px;
		background: #f9f9f9;
		box-shadow: 0 0 4px 1px rgb(0 0 0 / 30%);
	}

	/* side panel */

	.addons {
		position: relative;
		z-index: 2;
		display: flex;
		flex: none;
		flex-direction: column;
		align-items: center;
		width: 112px;
		box-sizing: border-box;
		border-left: 2px solid #dadbdf;
		padding-left: 2px;
		background: #fff;
	}

	.addons button {
		width: 56px;
		height: 112px;
	}

	hr {
		width: 40px;
		height: 2px;
		margin: 32px 0;
		border: 0;
		background: #dadbdf;
	}

	.addons .collapse {
		margin-top: auto;
	}
</style>
